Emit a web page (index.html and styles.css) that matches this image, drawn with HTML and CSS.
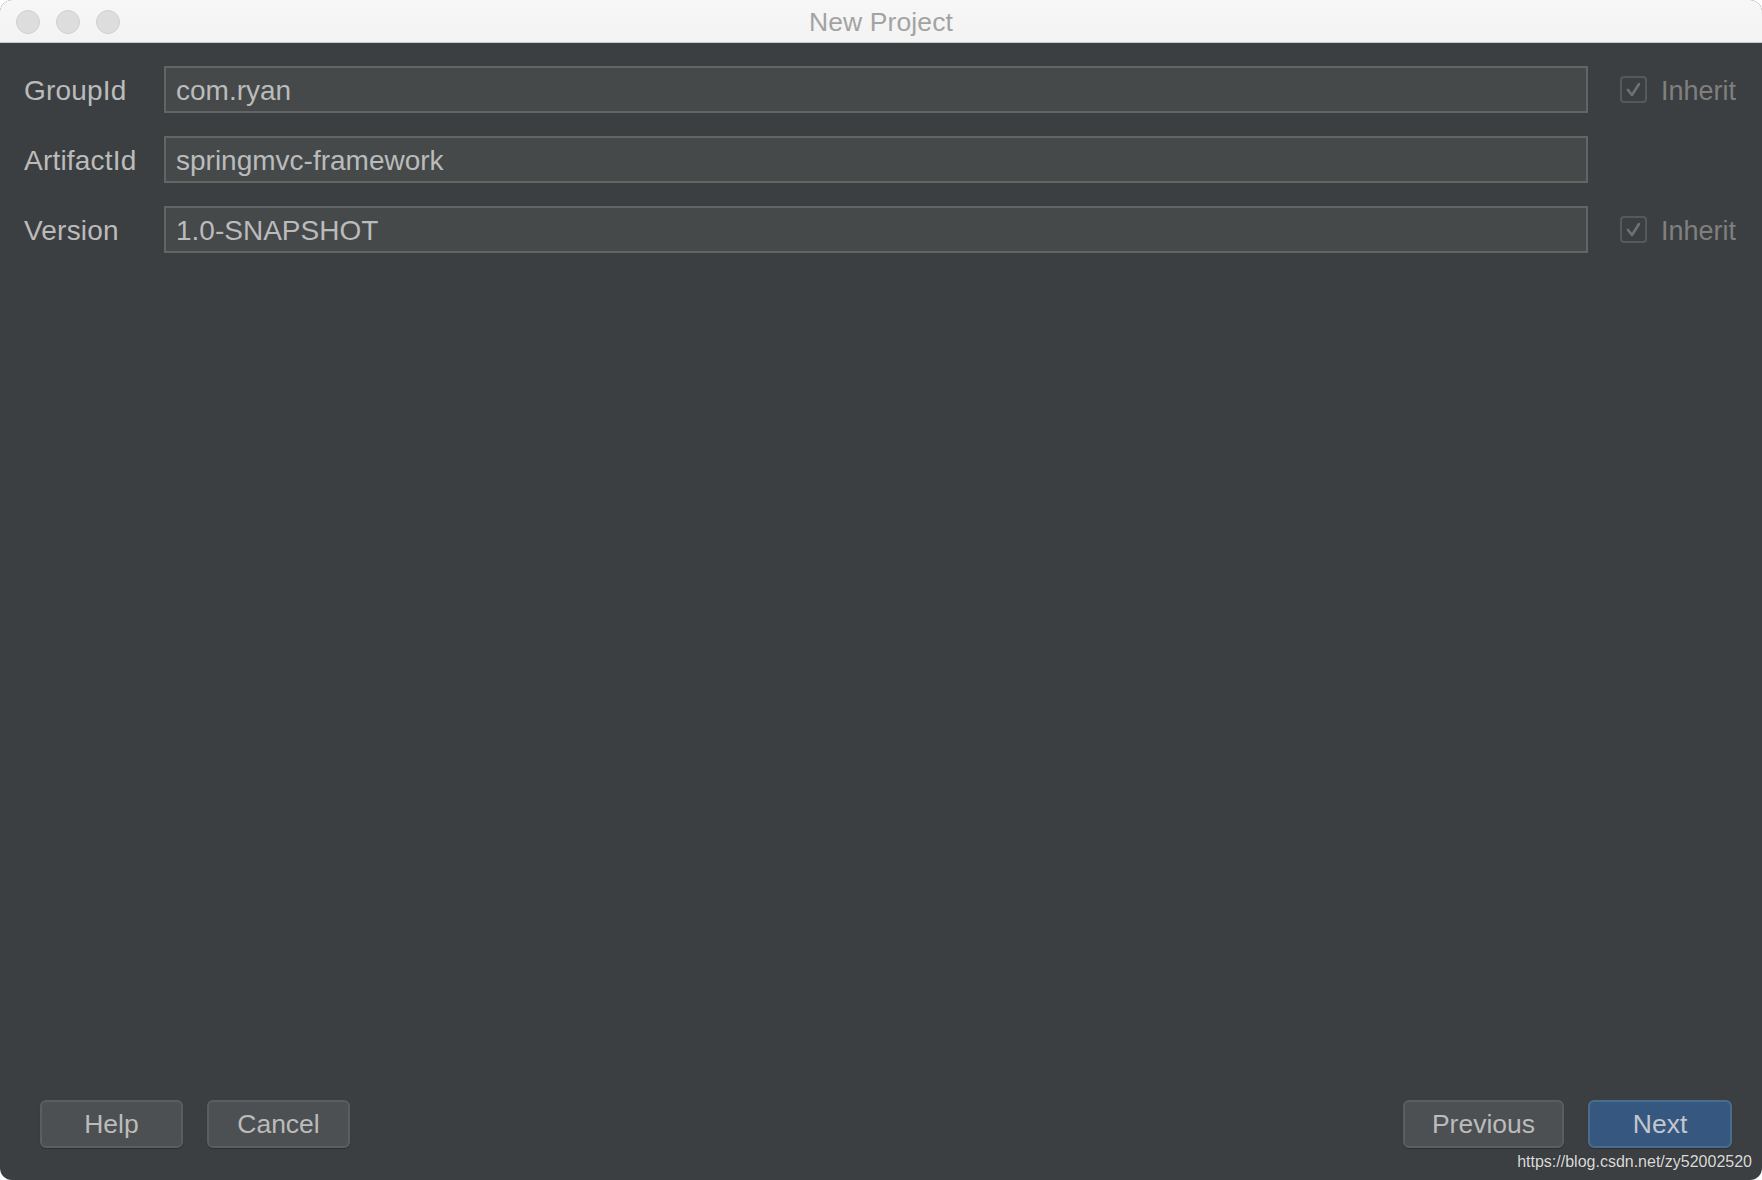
FILE: index.html
```html
<!DOCTYPE html>
<html>
<head>
<meta charset="utf-8">
<title>New Project</title>
<link rel="stylesheet" href="styles.css">
</head>
<body>
<div class="window">
  <div class="titlebar">
    <div class="lights">
      <span class="light"></span>
      <span class="light"></span>
      <span class="light"></span>
    </div>
    <div class="title">New Project</div>
  </div>
  <div class="content">
    <div class="form">
      <label class="label">GroupId</label>
      <div class="input">com.ryan</div>
      <div class="inherit">
        <span class="check"><svg viewBox="0 0 27 27" width="27" height="27"><path d="M8 14 L12 19 L19 8" fill="none" stroke="#6e7173" stroke-width="2.6" stroke-linecap="round" stroke-linejoin="round"/></svg></span>
        <span class="inherit-text">Inherit</span>
      </div>

      <label class="label">ArtifactId</label>
      <div class="input">springmvc-framework</div>
      <div class="inherit"></div>

      <label class="label">Version</label>
      <div class="input">1.0-SNAPSHOT</div>
      <div class="inherit">
        <span class="check"><svg viewBox="0 0 27 27" width="27" height="27"><path d="M8 14 L12 19 L19 8" fill="none" stroke="#6e7173" stroke-width="2.6" stroke-linecap="round" stroke-linejoin="round"/></svg></span>
        <span class="inherit-text">Inherit</span>
      </div>
    </div>
    <div class="buttons">
      <div class="group">
        <button class="btn">Help</button>
        <button class="btn">Cancel</button>
      </div>
      <div class="group">
        <button class="btn btn-prev">Previous</button>
        <button class="btn btn-primary">Next</button>
      </div>
    </div>
  </div>
  <div class="watermark">https://blog.csdn.net/zy52002520</div>
</div>
</body>
</html>
```

FILE: styles.css
```css
html, body {
  margin: 0;
  padding: 0;
  background: #ffffff;
}

body {
  width: 1762px;
  height: 1180px;
  overflow: hidden;
  font-family: "Liberation Sans", Arial, sans-serif;
}

.window {
  position: relative;
  width: 1762px;
  height: 1180px;
  border-radius: 12px;
  overflow: hidden;
  background: #3c3f41;
  display: flex;
  flex-direction: column;
}

.titlebar {
  height: 42px;
  flex: 0 0 42px;
  background: linear-gradient(#f7f7f7, #f3f3f3);
  border-bottom: 1px solid #c9c9c9;
  display: flex;
  align-items: center;
  justify-content: center;
  position: relative;
}

.lights {
  position: absolute;
  left: 16px;
  top: 10px;
  display: flex;
  gap: 16px;
}

.light {
  width: 22px;
  height: 22px;
  border-radius: 50%;
  background: #dddddd;
  border: 1px solid #d0d0d0;
}

.title {
  font-size: 26.5px;
  color: #a3a3a3;
  letter-spacing: 0.1px;
  padding-top: 2px;
}

.content {
  flex: 1;
  display: flex;
  flex-direction: column;
  justify-content: space-between;
  padding: 23px 25px 32px 24px;
}

.form {
  display: grid;
  grid-template-columns: 140px 1424px 117px;
  column-gap: 0;
  row-gap: 23px;
  grid-auto-rows: 47px;
}

.label {
  display: flex;
  align-items: center;
  font-size: 28px;
  letter-spacing: 0.2px;
  color: #bbbbbb;
  padding-top: 3px;
}

.input {
  box-sizing: border-box;
  height: 47px;
  background: #45494a;
  border: 2px solid #646464;
  color: #bbbbbb;
  font-size: 28px;
  padding: 3px 10px 0 10px;
  display: flex;
  align-items: center;
}

.inherit {
  margin-left: 32px;
  display: flex;
  align-items: center;
  gap: 14px;
}

.check {
  box-sizing: border-box;
  width: 27px;
  height: 27px;
  border: 2px solid #56595b;
  border-radius: 4px;
  display: flex;
  align-items: center;
  justify-content: center;
  flex: 0 0 27px;
}

.check svg {
  display: block;
  flex: 0 0 auto;
  margin: -2px;
}

.inherit-text {
  font-size: 27px;
  color: #7f7f7f;
  padding-top: 3px;
}

.buttons {
  display: flex;
  justify-content: space-between;
  align-items: center;
  padding-left: 16px;
  margin-right: 5px;
}

.group {
  display: flex;
  gap: 24px;
}

.btn {
  box-sizing: border-box;
  height: 48px;
  width: 143px;
  font-family: "Liberation Sans", Arial, sans-serif;
  font-size: 26.5px;
  color: #bbbbbb;
  background: #4c5052;
  border: 2px solid #5b5e60;
  border-radius: 6px;
  box-shadow: 0 1px 1px rgba(0, 0, 0, 0.25);
  padding: 1px 0 0 0;
  margin: 0;
  cursor: default;
}

.btn-prev {
  width: 161px;
}

.btn-primary {
  width: 144px;
  background: #365880;
  border-color: #4a6d8e;
  color: #c3c7cc;
}

.watermark {
  position: absolute;
  right: 10px;
  bottom: 9px;
  font-size: 16px;
  color: #dcdcdc;
  text-shadow: 0 0 1px rgba(0, 0, 0, 0.4);
}
```
